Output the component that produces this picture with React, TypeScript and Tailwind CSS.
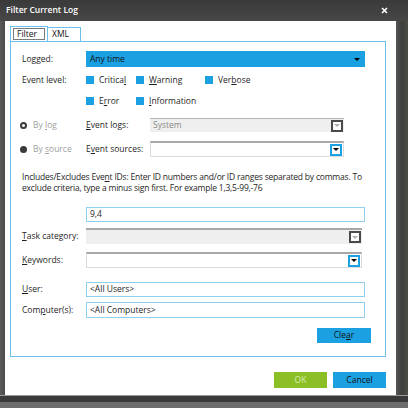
import React from 'react';

const Arrow: React.FC<{ color?: string }> = ({ color = 'border-t-black' }) => (
  <span className={`w-0 h-0 border-l-[3px] border-r-[3px] border-t-[3px] border-l-transparent border-r-transparent ${color}`}></span>
);

const DropBtn: React.FC<{ disabled?: boolean }> = ({ disabled }) => (
  <span
    className={`w-[12px] h-[12px] flex items-center justify-center bg-white border-2 ${
      disabled ? 'border-[#4a4a4a]' : 'border-[#1ba1e2]'
    }`}
  >
    <Arrow color={disabled ? 'border-t-[#b0b0b0]' : 'border-t-black'} />
  </span>
);

const Check: React.FC<{ children: React.ReactNode; w: string }> = ({ children, w }) => (
  <div className={`flex items-center ${w}`}>
    <span className="w-[8px] h-[8px] bg-[#1ba1e2]"></span>
    <span className="ml-[5px]">{children}</span>
  </div>
);

const Label: React.FC<{ children: React.ReactNode }> = ({ children }) => (
  <div className="ml-[11px] w-[64px] shrink-0 whitespace-nowrap">{children}</div>
);

export default function App() {
  return (
    <div className="w-[408px] h-[408px] overflow-hidden bg-[#454545] flex flex-col font-['Open_Sans',sans-serif] text-[8.5px] text-[#1f1f1f]">
      {/* title bar */}
      <div className="h-[21px] shrink-0 flex items-center justify-between pl-[6px] pr-[20px] bg-gradient-to-b from-[#3a3a3a] to-[#474747]">
        <span className="text-white font-semibold text-[8.5px]">Filter Current Log</span>
        <svg width="7" height="7" viewBox="0 0 7 7">
          <path d="M1 1L6 6M6 1L1 6" stroke="#fff" strokeWidth="1.6" />
        </svg>
      </div>

      <div className="h-[374px] shrink-0 flex">
        <div className="w-[5px] bg-gradient-to-r from-[#5a5a5a] to-[#4a4a4a]"></div>

        {/* dialog body */}
        <div className="w-[391px] bg-white pt-[6px] pl-[5px] flex flex-col">
          {/* tabs */}
          <div className="flex items-end h-[15px] -mb-[1px] relative">
            <div className="w-[38px] h-[16px] border border-[#6cc0ec] bg-white flex items-center justify-center">
              <div className="w-[32px] h-[12px] border border-[#7a7a7a] flex items-center pl-[3px] text-[#111]">Filter</div>
            </div>
            <div className="w-[33px] h-[15px] border border-l-0 border-[#6cc0ec] bg-white pl-[4px] flex items-center text-[#111]">
              XML
            </div>
          </div>

          {/* panel */}
          <div className="w-[376px] h-[316px] border border-[#6cc0ec] flex flex-col">
            <div className="mt-[9px] h-[16px] flex items-center">
              <Label>Logged:</Label>
              <div className="w-[279px] h-[16px] bg-[#1ba1e2] flex items-center justify-between pl-[4px] pr-[5px] text-[#111]">
                <span>Any time</span>
                <Arrow />
              </div>
            </div>

            <div className="mt-[7px] h-[12px] flex items-center">
              <Label>Event level:</Label>
              <Check w="w-[50px]">
                Critica<u>l</u>
              </Check>
              <Check w="w-[69px]">
                <u>W</u>arning
              </Check>
              <Check w="w-[60px]">
                Ver<u>b</u>ose
              </Check>
            </div>

            <div className="mt-[9px] h-[12px] flex items-center">
              <Label>&nbsp;</Label>
              <Check w="w-[50px]">
                E<u>r</u>ror
              </Check>
              <Check w="w-[69px]">
                <u>I</u>nformation
              </Check>
            </div>

            <div className="mt-[11px] h-[14px] flex items-center">
              <div className="ml-[9px] w-[66px] flex items-center text-[#a0a0a0]">
                <span className="w-[7px] h-[7px] rounded-full border-2 border-[#3a3a3a]"></span>
                <span className="ml-[6px]">
                  By <u>l</u>og
                </span>
              </div>
              <div className="w-[64px]">
                <u>E</u>vent logs:
              </div>
              <div className="w-[194px] h-[14px] bg-[#efefef] border-t border-[#b5b5b5] flex items-center justify-between pl-[3px] pr-[1px] text-[#8a8a8a]">
                <span>System</span>
                <DropBtn disabled />
              </div>
            </div>

            <div className="mt-[9px] h-[16px] flex items-center">
              <div className="ml-[9px] w-[66px] flex items-center text-[#a0a0a0]">
                <span className="w-[7px] h-[7px] rounded-full bg-[#3a3a3a]"></span>
                <span className="ml-[6px]">
                  By <u>s</u>ource
                </span>
              </div>
              <div className="w-[64px]">
                E<u>v</u>ent sources:
              </div>
              <div className="w-[194px] h-[16px] bg-white border border-[#dcdcdc] border-t-2 border-t-[#a8a8a8] flex items-center justify-end pr-[1px]">
                <DropBtn />
              </div>
            </div>

            <div className="mt-[15px] ml-[11px] leading-[10.5px] whitespace-nowrap tracking-[-0.2px]">
              Includes/Excludes Eve<u>n</u>t IDs: Enter ID numbers and/or ID ranges separated by commas. To
              <br />
              exclude criteria, type a minus sign first. For example 1,3,5-99,-76
            </div>

            <div className="mt-[14px] h-[15px] flex items-center">
              <div className="ml-[75px] w-[279px] h-[15px] border border-[#8fd0f0] flex items-center pl-[3px]">9,4</div>
            </div>

            <div className="mt-[6px] h-[16px] flex items-center">
              <Label>
                <u>T</u>ask category:
              </Label>
              <div className="w-[276px] h-[16px] bg-[#efefef] border-t-2 border-[#a8a8a8] flex items-center justify-end pr-[1px]">
                <DropBtn disabled />
              </div>
            </div>

            <div className="mt-[8px] h-[16px] flex items-center">
              <Label>
                <u>K</u>eywords:
              </Label>
              <div className="w-[276px] h-[16px] bg-white border border-[#dcdcdc] border-t-2 border-t-[#a8a8a8] flex items-center justify-end pr-[1px]">
                <DropBtn />
              </div>
            </div>

            <div className="mt-[14px] h-[15px] flex items-center">
              <Label>
                <u>U</u>ser:
              </Label>
              <div className="w-[279px] h-[15px] border border-[#8fd0f0] flex items-center pl-[3px]">&lt;All Users&gt;</div>
            </div>

            <div className="mt-[5px] h-[16px] flex items-center">
              <Label>
                Com<u>p</u>uter(s):
              </Label>
              <div className="w-[279px] h-[16px] border border-[#8fd0f0] flex items-center pl-[3px]">&lt;All Computers&gt;</div>
            </div>

            <div className="mt-[10px] flex justify-end pr-[14px]">
              <div className="w-[54px] h-[15px] bg-[#1ba1e2] flex items-center justify-center text-[#111]">
                Cle<u>a</u>r
              </div>
            </div>
          </div>

          {/* footer buttons */}
          <div className="mt-[15px] w-[376px] flex justify-end gap-[6px]">
            <div className="w-[53px] h-[16px] bg-[#8cbf26] flex items-center justify-center text-[#d6ecae]">OK</div>
            <div className="w-[53px] h-[16px] bg-[#1ba1e2] flex items-center justify-center text-[#111]">Cancel</div>
          </div>
        </div>

        <div className="flex-1 bg-gradient-to-r from-[#555555] via-[#3e3e3e] to-[#4a4f44]"></div>
      </div>

      <div className="h-[1px] shrink-0 bg-[#9a9a9a]"></div>
      <div className="h-[6px] shrink-0 bg-[#3a3a3a]"></div>
      <div className="flex-1 bg-[#6e6e6e]"></div>
    </div>
  );
}
